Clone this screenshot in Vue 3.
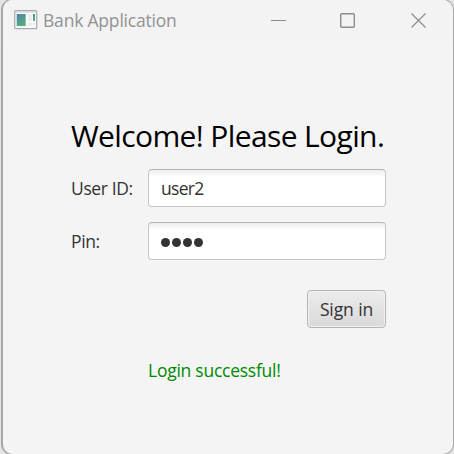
<script setup>
import { ref } from 'vue'
const userId = ref('user2')
const pin = ref('1234')
</script>

<template>
  <div class="desktop">
    <main class="window">
      <header class="bar">
        <svg class="logo" width="24" height="20" viewBox="0 0 24 20">
          <defs>
            <linearGradient id="tile" x1="0" y1="0" x2="0.6" y2="1">
              <stop offset="0" stop-color="#4b83ad" />
              <stop offset="1" stop-color="#55af78" />
            </linearGradient>
          </defs>
          <rect x="0.700" y="0.700" width="22" height="18" rx="1" fill="#fafafa" stroke="#a5adb3" stroke-width="1.300" />
          <path d="M1.500 2h20" stroke="#c9ced3" />
          <rect x="2.700" y="4" width="9" height="12" fill="url(#tile)" />
          <rect x="14" y="4" width="4" height="7" fill="#ececec" />
          <rect x="14" y="12.500" width="4" height="3.500" fill="#ececec" />
          <rect x="19" y="4" width="2" height="7" fill="url(#tile)" />
          <rect x="19" y="12.500" width="2" height="3.500" fill="#ececec" />
        </svg>
        <span class="caption">Bank Application</span>
        <svg class="controls" width="157" height="18" viewBox="0 0 157 18" fill="none" stroke="#8c8c8c">
          <path d="M1 8.500h15" />
          <rect x="70.700" y="1.700" width="13.600" height="13.600" rx="1" stroke-width="1.400" />
          <path d="M141.500 1.500l14 14M155.500 1.500l-14 14" stroke-width="1.200" />
        </svg>
      </header>
      <form class="form" @submit.prevent>
        <h1 class="title">Welcome! Please Login.</h1>
        <label class="label" for="uid">User ID:</label>
        <input id="uid" v-model="userId" class="field" type="text" />
        <span class="label">Pin:</span>
        <div class="field pin">
          <i v-for="n in pin.length" :key="n" class="dot"></i>
        </div>
        <button class="submit" type="submit">Sign in</button>
        <p class="message">Login successful!</p>
      </form>
    </main>
  </div>
</template>

<style>
body { background: #e4e4e4; overflow: hidden; }
</style>

<style scoped>
.desktop {
  box-sizing: border-box;
  height: 454px;
  width: 454px;
  padding-left: 1px;
  overflow: hidden;
  background: #e4e4e4;
  font-family: "Open Sans", "Noto Sans", sans-serif;
}
.window {
  box-sizing: border-box;
  height: 456px;
  border: 1px solid #a8a8a8;
  border-left-width: 2px;
  border-radius: 11px;
  margin-top: -1px;
  background: #f4f4f4;
  overflow: hidden;
}
.bar {
  display: flex;
  align-items: flex-start;
  height: 42px;
  padding: 0 26px 0 11px;
  background: #f3f3f3;
}
.logo { margin-top: 10px; }
.caption {
  margin: 8px 0 0 5px;
  font-size: 17.500px;
  line-height: 24px;
  letter-spacing: -0.200px;
  color: #929292;
  white-space: nowrap;
}
.controls { margin: 12px 0 0 auto; }
.form {
  display: grid;
  grid-template-columns: 77px 238px;
  grid-template-rows: 54px 53px 53px 53px 48px;
  padding: 73px 0 0 68px;
}
.title {
  grid-column: 1 / 3;
  margin: 1px 0 0;
  font-size: 30px;
  line-height: 40px;
  font-weight: 400;
  letter-spacing: -0.620px;
  color: #000;
  white-space: nowrap;
}
.label {
  height: 38px;
  line-height: 38px;
  font-size: 17.500px;
  letter-spacing: -0.370px;
  color: #333;
  white-space: nowrap;
}
.field {
  box-sizing: border-box;
  width: 238px;
  height: 38px;
  padding: 0 12px;
  border: 1px solid #c6c6c6;
  border-top-color: #b5b5b5;
  border-radius: 4px;
  background: linear-gradient(#eee 0, #fff 7px);
  font: 17.500px "Open Sans", sans-serif;
  letter-spacing: -0.700px;
  color: #333;
  outline: none;
}
.pin {
  display: flex;
  align-items: center;
  gap: 2px;
  padding-top: 3px;
}
.dot {
  width: 9px;
  height: 9px;
  border-radius: 50%;
  background: #333;
}
.submit {
  grid-column: 2;
  justify-self: end;
  box-sizing: border-box;
  width: 79px;
  height: 38px;
  margin-top: 15px;
  padding: 0;
  border: 1px solid #b4b4b4;
  border-radius: 4px;
  background: linear-gradient(#ececec, #d9d9d9);
  box-shadow: inset 0 0 0 1px #f2f2f2;
  font: 17.500px "Open Sans", sans-serif;
  letter-spacing: -0.100px;
  color: #333;
  white-space: nowrap;
}
.message {
  grid-column: 2;
  margin: 30px 0 0;
  font-size: 17.500px;
  line-height: 24px;
  letter-spacing: -0.250px;
  color: #008a00;
  white-space: nowrap;
}
</style>
